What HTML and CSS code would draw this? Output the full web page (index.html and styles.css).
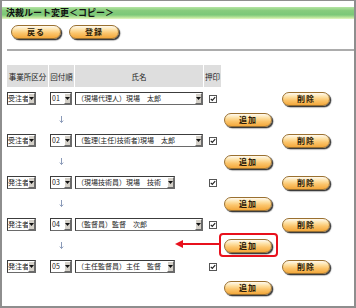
FILE: index.html
```html
<!DOCTYPE html>
<html lang="ja">
<head>
<meta charset="utf-8">
<link rel="stylesheet" href="styles.css">
</head>
<body>
<div class="frame">
  <div class="titlebar">決裁ルート変更＜コピー＞</div>
  <div class="toolbar">
    <span class="btn btn-top">戻る</span>
    <span class="btn btn-top">登録</span>
  </div>
  <div class="rule"></div>
  <div class="grid">
    <div class="th">事業所区分</div>
    <div class="th">回付順</div>
    <div class="th">氏名</div>
    <div class="th">押印</div>
    <div class="blank"></div>
    <div class="blank"></div>

    <!-- row 1 -->
    <div class="cell"><span class="sel sel-org"><span class="sel-text">受注者</span><span class="sel-btn"><svg width="5" height="3" viewBox="0 0 5 3"><path d="M0 0H5L2.5 3Z" fill="#111"/></svg></span></span></div>
    <div class="cell"><span class="sel sel-no"><span class="sel-text">01</span><span class="sel-btn"><svg width="5" height="3" viewBox="0 0 5 3"><path d="M0 0H5L2.5 3Z" fill="#111"/></svg></span></span></div>
    <div class="cell"><span class="sel sel-name"><span class="sel-text">（現場代理人）現場　太郎</span><span class="sel-btn"><svg width="5" height="3" viewBox="0 0 5 3"><path d="M0 0H5L2.5 3Z" fill="#111"/></svg></span></span></div>
    <div class="cell cell-center"><svg class="chk" width="8" height="8" viewBox="0 0 8 8"><rect x="0.5" y="0.5" width="7" height="7" fill="#fff" stroke="#555"/><path d="M1.8 3.8L3.3 5.4L6.2 2.2" fill="none" stroke="#222" stroke-width="1.2"/></svg></div>
    <div class="cell"></div>
    <div class="cell"><span class="btn">削除</span></div>

    <div class="cell"></div>
    <div class="cell cell-center"><svg class="down" width="5" height="7" viewBox="0 0 5 7"><path d="M2.5 0V6.5M0.8 4.6L2.5 6.5L4.2 4.6" fill="none" stroke="#8a9ab8" stroke-width="1"/></svg></div>
    <div class="cell"></div>
    <div class="cell"></div>
    <div class="cell cell-add"><span class="btn">追加</span></div>
    <div class="cell"></div>

    <!-- row 2 -->
    <div class="cell"><span class="sel sel-org"><span class="sel-text">受注者</span><span class="sel-btn"><svg width="5" height="3" viewBox="0 0 5 3"><path d="M0 0H5L2.5 3Z" fill="#111"/></svg></span></span></div>
    <div class="cell"><span class="sel sel-no"><span class="sel-text">02</span><span class="sel-btn"><svg width="5" height="3" viewBox="0 0 5 3"><path d="M0 0H5L2.5 3Z" fill="#111"/></svg></span></span></div>
    <div class="cell"><span class="sel sel-name"><span class="sel-text">（監理(主任)技術者)現場　太郎</span><span class="sel-btn"><svg width="5" height="3" viewBox="0 0 5 3"><path d="M0 0H5L2.5 3Z" fill="#111"/></svg></span></span></div>
    <div class="cell cell-center"><svg class="chk" width="8" height="8" viewBox="0 0 8 8"><rect x="0.5" y="0.5" width="7" height="7" fill="#fff" stroke="#555"/><path d="M1.8 3.8L3.3 5.4L6.2 2.2" fill="none" stroke="#222" stroke-width="1.2"/></svg></div>
    <div class="cell"></div>
    <div class="cell"><span class="btn">削除</span></div>

    <div class="cell"></div>
    <div class="cell cell-center"><svg class="down" width="5" height="7" viewBox="0 0 5 7"><path d="M2.5 0V6.5M0.8 4.6L2.5 6.5L4.2 4.6" fill="none" stroke="#8a9ab8" stroke-width="1"/></svg></div>
    <div class="cell"></div>
    <div class="cell"></div>
    <div class="cell cell-add"><span class="btn">追加</span></div>
    <div class="cell"></div>

    <!-- row 3 -->
    <div class="cell"><span class="sel sel-org"><span class="sel-text">発注者</span><span class="sel-btn"><svg width="5" height="3" viewBox="0 0 5 3"><path d="M0 0H5L2.5 3Z" fill="#111"/></svg></span></span></div>
    <div class="cell"><span class="sel sel-no"><span class="sel-text">03</span><span class="sel-btn"><svg width="5" height="3" viewBox="0 0 5 3"><path d="M0 0H5L2.5 3Z" fill="#111"/></svg></span></span></div>
    <div class="cell"><span class="sel sel-name sel-short"><span class="sel-text">（現場技術員）現場　技術</span><span class="sel-btn"><svg width="5" height="3" viewBox="0 0 5 3"><path d="M0 0H5L2.5 3Z" fill="#111"/></svg></span></span></div>
    <div class="cell cell-center"><svg class="chk" width="8" height="8" viewBox="0 0 8 8"><rect x="0.5" y="0.5" width="7" height="7" fill="#fff" stroke="#555"/><path d="M1.8 3.8L3.3 5.4L6.2 2.2" fill="none" stroke="#222" stroke-width="1.2"/></svg></div>
    <div class="cell"></div>
    <div class="cell"><span class="btn">削除</span></div>

    <div class="cell"></div>
    <div class="cell cell-center"><svg class="down" width="5" height="7" viewBox="0 0 5 7"><path d="M2.5 0V6.5M0.8 4.6L2.5 6.5L4.2 4.6" fill="none" stroke="#8a9ab8" stroke-width="1"/></svg></div>
    <div class="cell"></div>
    <div class="cell"></div>
    <div class="cell cell-add"><span class="btn">追加</span></div>
    <div class="cell"></div>

    <!-- row 4 -->
    <div class="cell"><span class="sel sel-org"><span class="sel-text">発注者</span><span class="sel-btn"><svg width="5" height="3" viewBox="0 0 5 3"><path d="M0 0H5L2.5 3Z" fill="#111"/></svg></span></span></div>
    <div class="cell"><span class="sel sel-no"><span class="sel-text">04</span><span class="sel-btn"><svg width="5" height="3" viewBox="0 0 5 3"><path d="M0 0H5L2.5 3Z" fill="#111"/></svg></span></span></div>
    <div class="cell"><span class="sel sel-name"><span class="sel-text">（監督員）監督　次郎</span><span class="sel-btn"><svg width="5" height="3" viewBox="0 0 5 3"><path d="M0 0H5L2.5 3Z" fill="#111"/></svg></span></span></div>
    <div class="cell cell-center"><svg class="chk" width="8" height="8" viewBox="0 0 8 8"><rect x="0.5" y="0.5" width="7" height="7" fill="#fff" stroke="#555"/><path d="M1.8 3.8L3.3 5.4L6.2 2.2" fill="none" stroke="#222" stroke-width="1.2"/></svg></div>
    <div class="cell"></div>
    <div class="cell"><span class="btn">削除</span></div>

    <div class="cell"></div>
    <div class="cell cell-center"><svg class="down" width="5" height="7" viewBox="0 0 5 7"><path d="M2.5 0V6.5M0.8 4.6L2.5 6.5L4.2 4.6" fill="none" stroke="#8a9ab8" stroke-width="1"/></svg></div>
    <div class="cell"></div>
    <div class="cell"></div>
    <div class="cell cell-add cell-mark">
      <svg class="pointer" width="46" height="8" viewBox="0 0 46 8"><path d="M46 4H6" stroke="#e8101c" stroke-width="2"/><path d="M0 4L8 0V8Z" fill="#e8101c"/></svg>
      <span class="mark-box"></span>
      <span class="btn">追加</span>
    </div>
    <div class="cell"></div>

    <!-- row 5 -->
    <div class="cell"><span class="sel sel-org"><span class="sel-text">発注者</span><span class="sel-btn"><svg width="5" height="3" viewBox="0 0 5 3"><path d="M0 0H5L2.5 3Z" fill="#111"/></svg></span></span></div>
    <div class="cell"><span class="sel sel-no"><span class="sel-text">05</span><span class="sel-btn"><svg width="5" height="3" viewBox="0 0 5 3"><path d="M0 0H5L2.5 3Z" fill="#111"/></svg></span></span></div>
    <div class="cell"><span class="sel sel-name sel-short"><span class="sel-text">（主任監督員）主任　監督</span><span class="sel-btn"><svg width="5" height="3" viewBox="0 0 5 3"><path d="M0 0H5L2.5 3Z" fill="#111"/></svg></span></span></div>
    <div class="cell cell-center"><svg class="chk" width="8" height="8" viewBox="0 0 8 8"><rect x="0.5" y="0.5" width="7" height="7" fill="#fff" stroke="#555"/><path d="M1.8 3.8L3.3 5.4L6.2 2.2" fill="none" stroke="#222" stroke-width="1.2"/></svg></div>
    <div class="cell"></div>
    <div class="cell"><span class="btn">削除</span></div>

    <div class="cell"></div>
    <div class="cell"></div>
    <div class="cell"></div>
    <div class="cell"></div>
    <div class="cell cell-add"><span class="btn">追加</span></div>
    <div class="cell"></div>
  </div>
</div>
</body>
</html>
```

FILE: styles.css
```css
* { box-sizing: border-box; }
html, body { margin: 0; padding: 0; background: #fff; }
body {
  font-family: "Noto Sans CJK JP", "Liberation Sans", sans-serif;
  color: #222;
}
.frame {
  width: 356px;
  height: 308px;
  border: 2px solid #8e8e8e;
  border-top-width: 1px;
  overflow: hidden;
}
.titlebar {
  margin-top: 6px;
  height: 12px;
  line-height: 12px;
  padding-left: 4px;
  font-size: 9px;
  font-weight: bold;
  color: #111;
  background: linear-gradient(to bottom, #b6e4a4 0%, #86cc7c 30%, #7cc878 65%, #b4e296 85%, #e6f6c2 100%);
}
.toolbar {
  margin-top: 6px;
  padding-left: 9px;
  display: flex;
  gap: 8px;
}
.btn {
  display: inline-flex;
  align-items: center;
  justify-content: center;
  width: 48px;
  height: 14px;
  border-radius: 7px;
  border: 1px solid #9a7030;
  background: linear-gradient(to bottom, #fffaf0 0%, #fde2a8 30%, #fbc56c 60%, #f3a83c 100%);
  box-shadow: 1px 1px 0 #3c3c3c, 1.5px 1.5px 1px #888;
  font-size: 8px;
  font-weight: bold;
  letter-spacing: 1px;
  color: #2a1a08;
  line-height: 1;
}
.btn-top { width: 50px; }
.rule {
  margin-top: 10px;
  margin-left: 5px;
  height: 2px;
  background: #acacac;
}
.grid {
  margin-top: 14px;
  padding-left: 5px;
  display: grid;
  grid-template-columns: 41px 25px 128px 17px 59px 48px;
  grid-template-rows: 23px;
  grid-auto-rows: 21px;
  column-gap: 1px;
  row-gap: 0;
}
.th {
  background: #dedede;
  font-size: 7.5px;
  display: flex;
  align-items: center;
  justify-content: center;
  color: #222;
  margin-bottom: 1px;
  white-space: nowrap;
}
.cell {
  display: flex;
  align-items: center;
  position: relative;
}
.cell-center { justify-content: center; }
.cell-add { padding-left: 2px; }
.sel {
  display: inline-flex;
  align-items: stretch;
  height: 13px;
  border: 1px solid #6a6a6a;
  border-top-color: #3c3c3c;
  border-left-color: #3c3c3c;
  background: #fff;
  font-size: 7px;
  color: #1a1a1a;
  white-space: nowrap;
  overflow: hidden;
}
.sel-text {
  flex: 1;
  padding-left: 0;
  line-height: 11px;
  overflow: hidden;
}
.sel-btn {
  width: 7px;
  flex: none;
  background: #d4d0c8;
  border-left: 1px solid #fff;
  border-top: 1px solid #fff;
  border-right: 1px solid #6a6a6a;
  border-bottom: 1px solid #6a6a6a;
  display: flex;
  align-items: center;
  justify-content: center;
}
.sel-org { width: 29px; }
.sel-no { width: 22px; margin-left: 1px; }
.sel-no .sel-text { padding-left: 1px; }
.sel-name .sel-text { padding-left: 1px; }
.sel-name { width: 128px; }
.sel-short { width: 100px; }
.chk { display: block; }
.down { display: block; }
.mark-box {
  position: absolute;
  left: -3px;
  top: -2px;
  width: 59px;
  height: 24px;
  border: 2px solid #e8101c;
  border-radius: 4px;
}
.pointer {
  position: absolute;
  left: -47px;
  top: 5px;
}
```
